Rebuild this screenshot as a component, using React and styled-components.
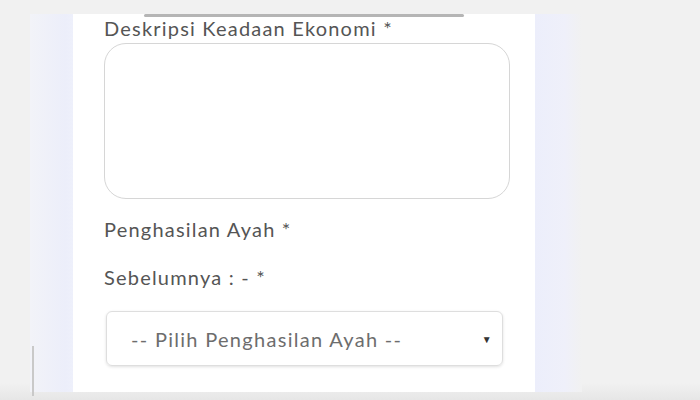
import React from "react";
import styled, { createGlobalStyle } from "styled-components";

const GlobalStyle = createGlobalStyle`
  html, body {
    margin: 0;
    padding: 0;
    background: #f1f1f1;
    font-family: Lato, "Noto Sans", sans-serif;
    overflow: hidden;
  }
`;

const Page = styled.div`
  height: 400px;
  padding-top: 14px;
  box-sizing: border-box;
  background: linear-gradient(to bottom, #f1f1f1 0, #f1f1f1 383px, #e6e6e6 400px);
`;

const Backdrop = styled.div`
  position: relative;
  margin-left: 30px;
  width: 552px;
  height: 378px;
  padding: 0 47px 0 43px;
  box-sizing: border-box;
  background: linear-gradient(
    to right,
    #f2f3f8 0,
    #eceefa 35px,
    #eef0fb 43px,
    #ffffff 43px,
    #ffffff 503px,
    #eceefb 505px,
    #eff0fa 535px,
    #f1f1f1 552px
  );
  &::before {
    content: "";
    position: absolute;
    left: 2px;
    top: 332px;
    width: 2px;
    height: 50px;
    background: #c9c9c9;
  }
`;

const Card = styled.div`
  background: #ffffff;
  height: 100%;
  padding: 0 25px 0 31px;
  display: flex;
  flex-direction: column;
  box-sizing: border-box;
`;

const Remnant = styled.div`
  height: 3px;
  margin-left: 40px;
  width: 320px;
  background: #b5b5b5;
  border-radius: 2px;
`;

const Label = styled.label`
  font-size: 20px;
  letter-spacing: 1.2px;
  color: #555555;
  line-height: 22px;
  margin-top: ${(p) => p.$top || 0}px;
`;

const TextArea = styled.textarea`
  margin-top: 4px;
  height: 156px;
  width: 406px;
  border: 1px solid #d6d6d6;
  border-radius: 22px;
  box-sizing: border-box;
  resize: none;
  outline: none;
  background: #fff;
`;

const SelectBox = styled.div`
  margin-top: 23px;
  margin-left: 2px;
  width: 397px;
  height: 55px;
  border: 1px solid #dedede;
  border-radius: 6px;
  box-shadow: 0 1px 3px rgba(0, 0, 0, 0.12);
  box-sizing: border-box;
  display: flex;
  align-items: center;
  justify-content: space-between;
  padding: 0 9px 0 24px;
  font-size: 20px;
  letter-spacing: 1.3px;
  color: #6d6d6d;
`;

const Caret = styled.span`
  font-size: 10px;
  color: #333;
`;

export default function App() {
  return (
    <>
      <GlobalStyle />
      <Page>
        <Backdrop>
          <Card>
            <Remnant />
            <Label $top={0}>Deskripsi Keadaan Ekonomi *</Label>
            <TextArea />
            <Label $top={19}>Penghasilan Ayah *</Label>
            <Label $top={26}>Sebelumnya : - *</Label>
            <SelectBox>
              <span>-- Pilih Penghasilan Ayah --</span>
              <Caret>▼</Caret>
            </SelectBox>
          </Card>
        </Backdrop>
      </Page>
    </>
  );
}
